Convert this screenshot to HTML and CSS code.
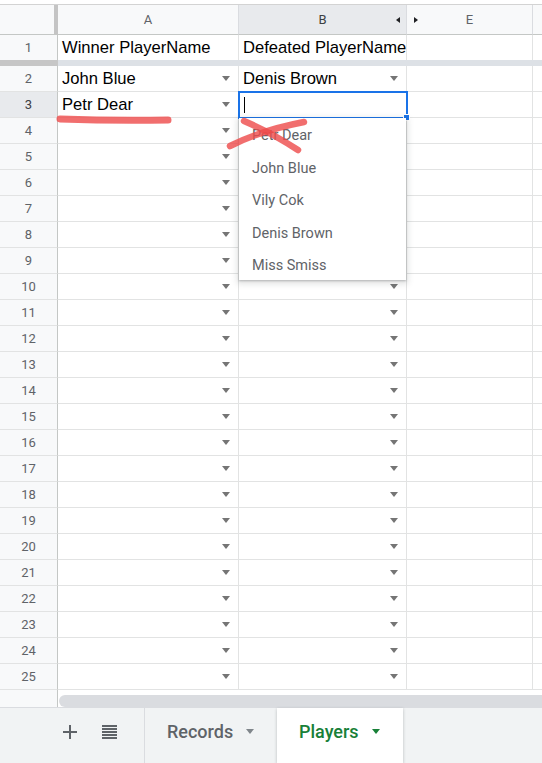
FILE: index.html
```html
<!DOCTYPE html>
<html lang="en">
<head>
<meta charset="utf-8">
<title>Match log</title>
<link rel="stylesheet" href="styles.css">
</head>
<body>
<div class="sheet">
  <div class="top-strip"></div>

  <div class="grid">
    <!-- column headers -->
    <div class="ch corner"></div>
    <div class="ch"><span class="letter">A</span></div>
    <div class="ch sel split"><span></span><span class="letter">B</span><span class="hide-l"></span></div>
    <div class="ch split"><span class="hide-r"></span><span class="letter">E</span><span></span></div>
    <div class="ch"></div>

    <!-- frozen row -->
    <div class="rh row1">1</div>
    <div class="cell row1">Winner PlayerName</div>
    <div class="cell row1">Defeated PlayerName</div>
    <div class="cell row1"></div>
    <div class="cell row1"></div>

    <div class="bar bar-rh"></div>
    <div class="bar bar-cells"></div>

    <div class="rh r">2</div>
    <div class="cell r"><span>John Blue</span><i class="dd"></i></div>
    <div class="cell r"><span>Denis Brown</span><i class="dd"></i></div>
    <div class="cell r"></div><div class="cell r"></div>

    <div class="rh r cur">3</div>
    <div class="cell r"><span>Petr Dear</span><i class="dd"></i></div>
    <div class="cell r edit"><span class="caret"></span></div>
    <div class="cell r"></div><div class="cell r"></div>

    <div class="rh r">4</div><div class="cell r"><i class="dd"></i></div><div class="cell r"><i class="dd"></i></div><div class="cell r"></div><div class="cell r"></div>
    <div class="rh r">5</div><div class="cell r"><i class="dd"></i></div><div class="cell r"><i class="dd"></i></div><div class="cell r"></div><div class="cell r"></div>
    <div class="rh r">6</div><div class="cell r"><i class="dd"></i></div><div class="cell r"><i class="dd"></i></div><div class="cell r"></div><div class="cell r"></div>
    <div class="rh r">7</div><div class="cell r"><i class="dd"></i></div><div class="cell r"><i class="dd"></i></div><div class="cell r"></div><div class="cell r"></div>
    <div class="rh r">8</div><div class="cell r"><i class="dd"></i></div><div class="cell r"><i class="dd"></i></div><div class="cell r"></div><div class="cell r"></div>
    <div class="rh r">9</div><div class="cell r"><i class="dd"></i></div><div class="cell r"><i class="dd"></i></div><div class="cell r"></div><div class="cell r"></div>
    <div class="rh r">10</div><div class="cell r"><i class="dd"></i></div><div class="cell r"><i class="dd"></i></div><div class="cell r"></div><div class="cell r"></div>
    <div class="rh r">11</div><div class="cell r"><i class="dd"></i></div><div class="cell r"><i class="dd"></i></div><div class="cell r"></div><div class="cell r"></div>
    <div class="rh r">12</div><div class="cell r"><i class="dd"></i></div><div class="cell r"><i class="dd"></i></div><div class="cell r"></div><div class="cell r"></div>
    <div class="rh r">13</div><div class="cell r"><i class="dd"></i></div><div class="cell r"><i class="dd"></i></div><div class="cell r"></div><div class="cell r"></div>
    <div class="rh r">14</div><div class="cell r"><i class="dd"></i></div><div class="cell r"><i class="dd"></i></div><div class="cell r"></div><div class="cell r"></div>
    <div class="rh r">15</div><div class="cell r"><i class="dd"></i></div><div class="cell r"><i class="dd"></i></div><div class="cell r"></div><div class="cell r"></div>
    <div class="rh r">16</div><div class="cell r"><i class="dd"></i></div><div class="cell r"><i class="dd"></i></div><div class="cell r"></div><div class="cell r"></div>
    <div class="rh r">17</div><div class="cell r"><i class="dd"></i></div><div class="cell r"><i class="dd"></i></div><div class="cell r"></div><div class="cell r"></div>
    <div class="rh r">18</div><div class="cell r"><i class="dd"></i></div><div class="cell r"><i class="dd"></i></div><div class="cell r"></div><div class="cell r"></div>
    <div class="rh r">19</div><div class="cell r"><i class="dd"></i></div><div class="cell r"><i class="dd"></i></div><div class="cell r"></div><div class="cell r"></div>
    <div class="rh r">20</div><div class="cell r"><i class="dd"></i></div><div class="cell r"><i class="dd"></i></div><div class="cell r"></div><div class="cell r"></div>
    <div class="rh r">21</div><div class="cell r"><i class="dd"></i></div><div class="cell r"><i class="dd"></i></div><div class="cell r"></div><div class="cell r"></div>
    <div class="rh r">22</div><div class="cell r"><i class="dd"></i></div><div class="cell r"><i class="dd"></i></div><div class="cell r"></div><div class="cell r"></div>
    <div class="rh r">23</div><div class="cell r"><i class="dd"></i></div><div class="cell r"><i class="dd"></i></div><div class="cell r"></div><div class="cell r"></div>
    <div class="rh r">24</div><div class="cell r"><i class="dd"></i></div><div class="cell r"><i class="dd"></i></div><div class="cell r"></div><div class="cell r"></div>
    <div class="rh r">25</div><div class="cell r"><i class="dd"></i></div><div class="cell r"><i class="dd"></i></div><div class="cell r"></div><div class="cell r"></div>
  </div>

  <div class="scroll-row">
    <div class="scroll-corner"></div>
    <div class="track"><div class="thumb"></div></div>
  </div>

  <div class="tabbar">
    <div class="tools">
      <svg class="ico" width="14" height="14" viewBox="0 0 14 14"><path d="M7 0v14M0 7h14" stroke="#5f6368" stroke-width="2"/></svg>
      <svg class="ico" width="15" height="14" viewBox="0 0 15 14"><g fill="#5f6368"><rect x="0" y="0" width="15" height="2"/><rect x="0" y="3" width="15" height="2"/><rect x="0" y="6" width="15" height="2"/><rect x="0" y="9" width="15" height="2"/><rect x="0" y="12" width="15" height="2"/></g></svg>
    </div>
    <div class="tab records"><span>Records</span><i class="tab-dd"></i></div>
    <div class="tab active"><span>Players</span><i class="tab-dd"></i></div>
  </div>

  <!-- validation list opened from B3 -->
  <ul class="menu">
    <li>Petr Dear</li>
    <li>John Blue</li>
    <li>Vily Cok</li>
    <li>Denis Brown</li>
    <li>Miss Smiss</li>
  </ul>

  <!-- hand-drawn marks -->
  <svg class="ink" width="542" height="763" viewBox="0 0 542 763">
    <g fill="none" stroke="#ee4a4a" stroke-opacity="0.8" stroke-linecap="round">
      <path d="M60 119 Q115 121 168 120" stroke-width="7"/>
      <path d="M230 146 Q262 130 304 122" stroke-width="6.5"/>
      <path d="M244 121 Q272 133 298 150" stroke-width="6.5"/>
    </g>
  </svg>
</div>
</body>
</html>
```

FILE: styles.css
```css
html, body {
  margin: 0;
  padding: 0;
  background: #ffffff;
}

body {
  width: 542px;
  height: 763px;
  overflow: hidden;
  font-family: "Liberation Sans", Arial, sans-serif;
}

.sheet {
  position: relative;
  width: 542px;
  height: 763px;
  display: flex;
  flex-direction: column;
  overflow: hidden;
}

.top-strip {
  height: 4px;
  border-bottom: 1px solid #d3d3d3;
  flex: none;
}

/* ---------- grid ---------- */
.grid {
  display: grid;
  grid-template-columns: 58px 181px 168px 126px 1fr;
  flex: none;
}

.grid > div {
  box-sizing: border-box;
  border-right: 1px solid #e2e3e3;
  border-bottom: 1px solid #e2e3e3;
}

.ch {
  height: 30px;
  background: #f8f9fa;
  border-bottom-color: #c4c7c5 !important;
  border-right-color: #dadce0 !important;
  display: flex;
  align-items: center;
  justify-content: center;
  font-family: Roboto, "Liberation Sans", sans-serif;
  font-size: 13px;
  color: #5f6368;
}

.ch.corner {
  border-right: 4px solid #c4c4c4 !important;
}

.ch.sel {
  background: #e8eaed;
  color: #3c4043;
}

.ch.split {
  display: grid;
  grid-template-columns: 1fr auto 1fr;
  align-items: center;
}

.hide-l {
  justify-self: end;
  margin-right: 6px;
  width: 0;
  height: 0;
  border-top: 3.5px solid transparent;
  border-bottom: 3.5px solid transparent;
  border-right: 4px solid #202124;
}

.hide-r {
  justify-self: start;
  margin-left: 7px;
  width: 0;
  height: 0;
  border-top: 3.5px solid transparent;
  border-bottom: 3.5px solid transparent;
  border-left: 4px solid #202124;
}

.rh {
  background: #f8f9fa;
  border-right-color: #c4c7c5 !important;
  display: flex;
  align-items: center;
  justify-content: center;
  font-family: Roboto, "Liberation Sans", sans-serif;
  font-size: 13px;
  color: #5f6368;
}

.rh.cur {
  background: #e8eaed;
  color: #3c4043;
}

.cell {
  display: flex;
  align-items: center;
  justify-content: space-between;
  padding: 0 8px 0 4px;
  font-size: 16.6px;
  color: #000000;
  white-space: nowrap;
  overflow: hidden;
}

.row1 {
  height: 25px;
  border-bottom: 0 !important;
}

.r {
  height: 26px;
}

.bar {
  height: 6px;
  border: 0 !important;
}

.bar-rh {
  background: #c6c6c6;
}

.bar-cells {
  grid-column: 2 / -1;
  background: #dde1e6;
}

.dd {
  margin-left: auto;
  width: 0;
  height: 0;
  border-left: 4.5px solid transparent;
  border-right: 4.5px solid transparent;
  border-top: 5px solid #757575;
}

.cell.edit {
  position: relative;
  z-index: 2;
  outline: 2px solid #1a73e8;
  outline-offset: -1px;
  overflow: visible;
}

.cell.edit::after {
  content: "";
  position: absolute;
  right: -4px;
  bottom: -4px;
  width: 5px;
  height: 5px;
  background: #1a73e8;
  border: 1px solid #ffffff;
}

.caret {
  display: block;
  width: 1px;
  height: 16px;
  background: #000000;
  margin-left: 1px;
}

/* ---------- horizontal scroller ---------- */
.scroll-row {
  height: 17px;
  display: flex;
  flex: none;
}

.scroll-corner {
  width: 58px;
  box-sizing: border-box;
  background: #f8f9fa;
  border-right: 1px solid #c4c7c5;
}

.track {
  flex: 1;
  padding: 5px 0 0 1px;
  background: #ffffff;
}

.thumb {
  height: 12px;
  background: #dadce0;
  border-radius: 6px 0 0 6px;
}

/* ---------- sheet tabs ---------- */
.tabbar {
  height: 56px;
  box-sizing: border-box;
  border-top: 1px solid #dadce0;
  background: #f1f3f4;
  display: flex;
  flex: none;
}

.tools {
  width: 144px;
  box-sizing: border-box;
  padding: 0 0 8px 63px;
  display: flex;
  align-items: center;
  gap: 25px;
}

.ico {
  display: block;
}

.tab {
  display: flex;
  align-items: center;
  box-sizing: border-box;
  padding: 0 0 8px 22px;
  font-family: Roboto, "Liberation Sans", sans-serif;
  font-weight: 500;
  font-size: 18px;
}

.tab.records {
  width: 133px;
  border-left: 1px solid #dadce0;
  color: #5f6368;
}

.tab.active {
  width: 126px;
  background: #ffffff;
  color: #188038;
  box-shadow: 0 1px 3px rgba(60, 64, 67, 0.3);
}

.tab-dd {
  margin-left: 13px;
  width: 0;
  height: 0;
  border-left: 4.5px solid transparent;
  border-right: 4.5px solid transparent;
  border-top: 5px solid currentColor;
}

.tab.records .tab-dd {
  border-top-color: #80868b;
}

/* ---------- validation dropdown ---------- */
.menu {
  position: absolute;
  left: 239px;
  top: 118px;
  z-index: 3;
  width: 167px;
  height: 162px;
  box-sizing: border-box;
  margin: 0;
  padding: 2px 0 0;
  list-style: none;
  background: #ffffff;
  box-shadow: 0 2px 6px 2px rgba(60, 64, 67, 0.15), 0 1px 2px rgba(60, 64, 67, 0.3);
}

.menu li {
  height: 32.6px;
  line-height: 32.6px;
  padding-left: 13px;
  font-family: Roboto, "Liberation Sans", sans-serif;
  font-size: 14.5px;
  color: #5f6368;
}

/* ---------- annotation layer ---------- */
.ink {
  position: absolute;
  left: 0;
  top: 0;
  z-index: 4;
  pointer-events: none;
}
```
